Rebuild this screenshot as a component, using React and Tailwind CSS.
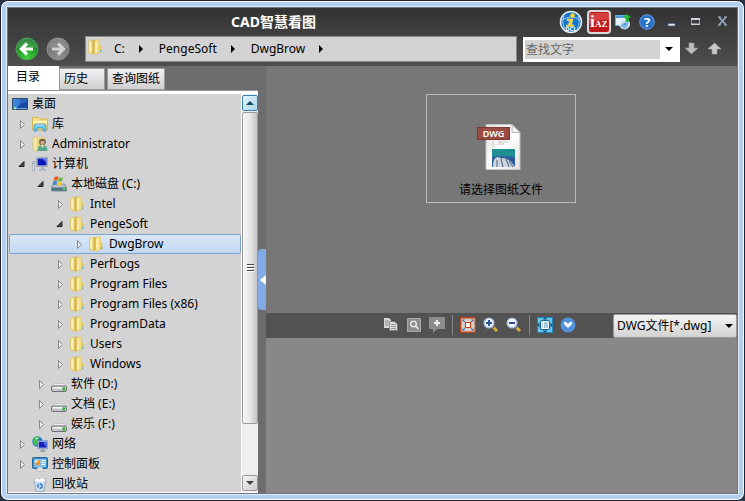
import React, { useState } from 'react';
import clsx from 'clsx';

const TREE = [
  { name: '桌面', icon: 'desktop', level: 0 },
  { name: '库', icon: 'library', level: 1, state: 'closed' },
  { name: 'Administrator', icon: 'user', level: 1, state: 'closed' },
  { name: '计算机', icon: 'computer', level: 1, state: 'open' },
  { name: '本地磁盘 (C:)', icon: 'system', level: 2, state: 'open' },
  { name: 'Intel', icon: 'folder', level: 3, state: 'closed' },
  { name: 'PengeSoft', icon: 'folder', level: 3, state: 'open' },
  { name: 'DwgBrow', icon: 'folder', level: 4, state: 'closed' },
  { name: 'PerfLogs', icon: 'folder', level: 3, state: 'closed' },
  { name: 'Program Files', icon: 'folder', level: 3, state: 'closed' },
  { name: 'Program Files (x86)', icon: 'folder', level: 3, state: 'closed' },
  { name: 'ProgramData', icon: 'folder', level: 3, state: 'closed' },
  { name: 'Users', icon: 'folder', level: 3, state: 'closed' },
  { name: 'Windows', icon: 'folder', level: 3, state: 'closed' },
  { name: '软件 (D:)', icon: 'drive', level: 2, state: 'closed' },
  { name: '文档 (E:)', icon: 'drive', level: 2, state: 'closed' },
  { name: '娱乐 (F:)', icon: 'drive', level: 2, state: 'closed' },
  { name: '网络', icon: 'network', level: 1, state: 'closed' },
  { name: '控制面板', icon: 'control', level: 1, state: 'closed' },
  { name: '回收站', icon: 'recycle', level: 1 },
];

const INDENT = ['pl-0.5', 'pl-[5px]', 'pl-6', 'pl-[43px]', 'pl-[62px]'];
const TABS = ['目录', '历史', '查询图纸'];

const FolderIcon = () => (
  <svg viewBox="0 0 16 16" className="h-4 w-4 shrink-0">
    <path d="M.5 2.2 5 1.2v13.6l-4.5-1z" fill="#f3df8c" stroke="#d9bf62" strokeWidth=".6" />
    <path d="M1.5 3 3 2.6v10.6l-1.5-.4z" fill="#fbf3bf" />
    <path d="M4.5 1.2 7.5.6v13.6l-3 1z" fill="#d3b449" />
    <path d="M6.5 1.6 11.5.4v13.2l-5 1.9z" fill="#f3de83" stroke="#d9bd58" strokeWidth=".5" />
    <path d="M7.3 2.6 9 2.2v11.2l-1.7.6z" fill="#fbf0b2" />
    <path d="M11.5 6.5h2v6.7l-2 .6z" fill="#e6ca5d" />
    <path d="M12 11h1.2v2H12z" fill="#53b8c8" />
  </svg>
);

const Monitor = ({ x = 0, y = 0 }) => (
  <g transform={`translate(${x} ${y})`}>
    <path d="M0 0h10v8H0z" fill="#dce6f0" stroke="#5a6fb0" strokeWidth=".6" />
    <path d="M1 1h8v6H1z" fill="#1420b8" />
    <path d="M5 1h4v6z" fill="#4b6df0" />
    <path d="M4 8h2v2h2v1H2v-1h2z" fill="#8796a5" />
  </g>
);

const TreeIcon = ({ type }) => {
  if (type === 'folder') return <FolderIcon />;
  return (
    <svg viewBox="0 0 16 16" className="h-4 w-4 shrink-0">
      {type === 'desktop' && (
        <>
          <path d="M.5 2.5h15v11H.5z" fill="#174aa4" stroke="#334a69" />
          <path d="M1 3h9L5 12H1z" fill="#3d83dc" />
          <path d="M8 3h7v3c-3 0-7 2-9 6z" fill="#2c62ba" />
          <path d="M1 12h14v1H1z" fill="#7aa7cf" />
          <circle cx="3" cy="12" r="1.5" fill="#55c1e8" />
          <path d="M2.5 11.5h1.5V13H2.5z" fill="#f5cf42" />
        </>
      )}
      {type === 'library' && (
        <>
          <path d="M.5 1.5h6L8 3h7.5v11H.5z" fill="#f2dc85" stroke="#d6b650" />
          <path d="M1 5h14v2H1z" fill="#fff3b5" />
          <path d="M2 15V11q0-3 3-3h6q3 0 3 3v4h-3v-3H5v3z" fill="#6bc6eb" stroke="#348bc3" strokeWidth=".7" />
          <path d="M3.5 10q1-1 2-1h5q1 0 2 1" fill="none" stroke="#c9f0fd" />
        </>
      )}
      {type === 'user' && (
        <>
          <path d="M1 1.5 6 .8v14.4l-5-1z" fill="#f6e8a2" stroke="#d3b651" strokeWidth=".6" />
          <path d="M5 1.2h8V14l-8 1z" fill="#e9d27a" />
          <path d="M5.5 15q0-6 5-6t5 6z" fill="#58a68b" />
          <path d="m9 9 1.5 3L12 9z" fill="#eef3ee" />
          <circle cx="10.5" cy="6" r="3.3" fill="#6c5a48" />
          <circle cx="10.5" cy="6.8" r="2.1" fill="#d9aa82" />
        </>
      )}
      {type === 'computer' && (
        <>
          <path d="M.5 5.5h2v9h-2z" fill="#e6ebee" stroke="#8e9ca7" strokeWidth=".7" />
          <path d="M1 7h1v1H1z" fill="#3cbe46" />
          <path d="M4.5 1.5h11v9h-11z" fill="#dce3ea" stroke="#8b98a6" strokeWidth=".7" />
          <path d="M5.5 2.5h9v7h-9z" fill="#0c1bb8" />
          <path d="M10 2.5h4.5v4z" fill="#5c80ee" />
          <path d="M9 11h3v2h2v1.5H7V13h2z" fill="#a8b5c0" />
        </>
      )}
      {type === 'system' && (
        <>
          <path d="M.5 11.5 2.5 8h11l2 3.5V15H.5z" fill="#b8c1c8" stroke="#59656d" strokeWidth=".6" />
          <path d="M1 11.5h14v3.3H1z" fill="#4f7782" />
          <path d="M12 12h2v2h-2z" fill="#42e25c" />
          <path d="M3.5 1.2q2-1.5 4-.3L6.5 4.6q-2-1-4 .2z" fill="#e65a24" />
          <path d="M8 1.2q2 1 4 0l-1 3.7q-2 1-4 0z" fill="#6eb93c" />
          <path d="M2.3 5.3q2-1 3.9 0L5.3 9q-2-1-4 .2z" fill="#3d88dd" />
          <path d="M6.8 5.5q2 1 4 0l-1 3.7q-2 1-4 0z" fill="#f7ca35" />
        </>
      )}
      {type === 'drive' && (
        <>
          <path d="M3 7.5h10l2.3 3H.7z" fill="#e9e9ea" stroke="#b5b5b8" strokeWidth=".6" />
          <rect x=".5" y="10" width="15" height="5.5" rx="1.5" fill="#c2c4ca" stroke="#6e7277" />
          <path d="M2 11h9v1.5H2z" fill="#fafafc" />
          <path d="M11.5 11.5h2.5v3h-2.5z" fill="#2eb52b" />
        </>
      )}
      {type === 'network' && (
        <>
          <circle cx="5.5" cy="5.5" r="5.2" fill="#2379cf" />
          <path d="M2 1.8q3.5-2.3 6-.5L5.5 4l1 2.5-3 3.5-2.5-4z" fill="#3fc447" />
          <path d="M3.5 2q2-1 3 0l-2 2z" fill="#c8f5d2" />
          <Monitor x={5.7} y={4.7} />
        </>
      )}
      {type === 'control' && (
        <>
          <rect x=".5" y="1.5" width="15" height="11" rx="1" fill="#3c91cf" stroke="#286899" />
          <path d="M2 3h12v8H2z" fill="#7cc0ea" />
          <circle cx="5.5" cy="6.5" r="2.7" fill="#f4f5ef" />
          <path d="M5.5 3.8A2.7 2.7 0 1 1 2.8 6.5h2.7z" fill="#f28c25" />
          <path d="M9.5 4.5H14M9.5 6.5H14M9.5 8.5H13" stroke="#fff" />
          <path d="M5 13q0-2 3-2t3 2v2.5H5z" fill="#e2e4e6" stroke="#aaa" strokeWidth=".5" />
        </>
      )}
      {type === 'recycle' && (
        <>
          <path d="M2 3h12l-2 12.5H4z" fill="#cbdcE8" stroke="#93a7b8" strokeWidth=".8" />
          <path d="m2.5 3.5 2.5-1.5 2 1.5L10 2l3.5 1.5-1 2h-9z" fill="#f9fbfc" />
          <circle cx="8" cy="10" r="2.1" fill="none" stroke="#3b7ed5" strokeWidth="1.5" strokeDasharray="3.4 1" />
        </>
      )}
    </svg>
  );
};

const Expander = ({ state }) => (
  <svg viewBox="0 0 14 14" className="h-3.5 w-3.5 shrink-0">
    {state === 'closed' && <path d="M5.5 3.5v8L9.5 7.5z" fill="#eee" stroke="#888" />}
    {state === 'open' && <path d="M9 4.5v5H4z" fill="#484848" stroke="#222" />}
  </svg>
);

const NavButton = ({ label, forward }) => (
  <button aria-label={label} className="h-6 w-6 shrink-0">
    <svg viewBox="0 0 24 24" className="h-6 w-6">
      <defs>
        <radialGradient id={forward ? 'nav-grey' : 'nav-green'} cx="50%" cy="90%" r="80%">
          <stop offset="0" stopColor={forward ? '#8f8f8f' : '#3fd03a'} />
          <stop offset="1" stopColor={forward ? '#707070' : '#117a24'} />
        </radialGradient>
      </defs>
      <circle cx="12" cy="12" r="11" fill={forward ? 'url(#nav-grey)' : 'url(#nav-green)'} stroke={forward ? '#8e8e8e' : '#4f9a58'} />
      <path d="M2 11a10 10 0 0 1 20 0Q12 8 2 11z" fill="#fff" opacity=".14" />
      <path
        d={forward ? 'M6 12h11M12 6.5l5.5 5.5-5.5 5.5' : 'M18 12H7M12 6.5 6.5 12l5.5 5.5'}
        fill="none"
        stroke={forward ? '#d2d2d2' : '#fff'}
        strokeWidth="3.2"
      />
    </svg>
  </button>
);

const TitleBar = () => (
  <div className="flex h-7 items-center pr-1.5 text-white">
    <h1 className="min-w-0 flex-1 truncate pl-[223px] text-sm leading-6 font-bold">CAD智慧看图</h1>
    <div className="flex shrink-0 items-center">
      <button aria-label="DCL" className="h-6 w-6">
        <svg viewBox="0 0 24 24" className="h-6 w-6">
          <circle cx="12" cy="12" r="10.5" fill="#1676c7" stroke="#e6edf3" strokeWidth="1.5" />
          <path d="M3 10q9-6 18 0M5 6q-3 6 1 13M19 6q3 6-1 13" fill="none" stroke="#9acdf0" />
          <path d="M8 9h6l-1.5 6H15v1.5H7.5V15h2L10.5 10.5H8z" fill="#ffcf23" stroke="#fff0a0" strokeWidth=".5" />
          <circle cx="13.5" cy="5.5" r="2.3" fill="#ffd52c" />
          <text x="12" y="21" textAnchor="middle" fontSize="6" fontWeight="bold" fill="#fff">DCL</text>
        </svg>
      </button>
      <button aria-label="iAZ" className="ml-1 h-6 w-6">
        <svg viewBox="0 0 24 24" className="h-6 w-6">
          <rect x="1" y="1" width="22" height="22" rx="3" fill="#c0181c" stroke="#dadada" strokeWidth="2" />
          <path d="M2 3h20v7q-9-1-20 4z" fill="#e05b57" opacity=".6" />
          <text x="3" y="17" fontFamily="Liberation Serif, serif" fontSize="17" fontWeight="bold" fill="#fff">i</text>
          <text x="8" y="17" fontFamily="Liberation Serif, serif" fontSize="9" fontWeight="bold" fill="#fff">AZ</text>
        </svg>
      </button>
      <button aria-label="更新" className="ml-1 h-4 w-4">
        <svg viewBox="0 0 16 16" className="h-4 w-4">
          <path d="M.5 1.5h10v10H.5z" fill="#e6f2fc" stroke="#6eafe2" />
          <path d="M1 2h9v2H1z" fill="#4897dc" />
          <circle cx="9.5" cy="10" r="5" fill="#cfe2f4" stroke="#eef6fc" />
          <path d="M5 12q4-4 9-4-1 6-5 7z" fill="#7fb6e6" />
          <circle cx="9.5" cy="10" r="1.3" fill="#4f8ec8" />
          <path d="m12 0 4 4h-2.5v4h-3V4H8z" fill="#20bd37" />
        </svg>
      </button>
      <button aria-label="帮助" className="ml-2 h-4 w-4">
        <svg viewBox="0 0 16 16" className="h-4 w-4">
          <circle cx="8" cy="8" r="7.3" fill="#2970c8" stroke="#65a0e1" />
          <text x="8" y="12.5" textAnchor="middle" fontSize="13" fontWeight="bold" fill="#fff">?</text>
        </svg>
      </button>
      <button aria-label="最小化" className="ml-2 h-4 w-4">
        <svg viewBox="0 0 16 16" className="h-4 w-4"><path d="M5 9.5h7v2.5H5z" fill="#dbe4ef" stroke="#526680" strokeWidth=".7" /></svg>
      </button>
      <button aria-label="最大化" className="ml-2 h-4 w-4">
        <svg viewBox="0 0 16 16" className="h-4 w-4"><path d="M4.5 4.5h8v6h-8z" fill="none" stroke="#8fa2bb" /><path d="M4 4h9v2H4zM4 9.5h9V11H4z" fill="#c9d6e5" /></svg>
      </button>
      <button aria-label="关闭" className="ml-3 h-4 w-4">
        <svg viewBox="0 0 16 16" className="h-4 w-4"><path d="m4 3 7 8M11 3l-7 8" stroke="#91a4bd" strokeWidth="1.8" /><path d="M3 3h3M9 3h3M3 11h3M9 11h3" stroke="#a6b5c8" /></svg>
      </button>
    </div>
  </div>
);

const CrumbArrow = () => (
  <svg viewBox="0 0 8 8" className="h-2 w-2 shrink-0"><path d="M2 0v8l4-4z" fill="#000" /></svg>
);

const AddressBar = () => (
  <div className="flex h-[30px] items-center pb-1">
    <div className="flex w-[77px] shrink-0 items-center gap-[7px] pl-[7px]">
      <NavButton label="后退" />
      <NavButton label="前进" forward />
    </div>
    <nav aria-label="路径" className="flex h-[26px] min-w-0 flex-1 items-center border border-[#8a8a8a] bg-[#d3d3d3] pl-0.5 text-black">
      <span className="pb-1"><FolderIcon /></span>
      <button className="ml-[10px]">C:</button>
      <span className="ml-3"><CrumbArrow /></span>
      <button className="ml-[14px]">PengeSoft</button>
      <span className="ml-3"><CrumbArrow /></span>
      <button className="ml-[14px]">DwgBrow</button>
      <span className="ml-3"><CrumbArrow /></span>
    </nav>
    <div className="ml-1.5 flex h-[25px] w-[157px] shrink-0 items-center bg-white p-[2px]">
      <input
        aria-label="查找文字"
        placeholder="查找文字"
        className="h-[19px] w-[135px] bg-[#d3d3d3] pl-px text-black outline-none placeholder:text-[#666]"
      />
      <button aria-label="查找记录" className="flex h-5 flex-1 items-center justify-center">
        <svg viewBox="0 0 8 4" className="h-1 w-2"><path d="M0 0h8L4 4z" fill="#000" /></svg>
      </button>
    </div>
    <button aria-label="查找下一个" className="ml-1 h-4 w-4">
      <svg viewBox="0 0 16 16" className="h-4 w-4"><path d="M5 2h5v5h4l-6.5 6L1 7h4z" fill="#bdbdbd" stroke="#969696" strokeWidth=".6" /></svg>
    </button>
    <button aria-label="查找上一个" className="ml-[7px] mr-[14px] h-4 w-4">
      <svg viewBox="0 0 16 16" className="h-4 w-4"><path d="M5 13h5V8h4L7.5 2 1 8h4z" fill="#c8c8c8" stroke="#a3a3a3" strokeWidth=".6" /></svg>
    </button>
  </div>
);

const ScrollBar = () => (
  <div className="flex w-[17px] shrink-0 flex-col border-l border-white bg-[#f0f0f0] py-px">
    <button aria-label="向上滚动" className="flex h-4 w-4 shrink-0 items-center justify-center rounded-xs border border-[#3c7fb1] bg-gradient-to-br from-[#e5f5fd] to-[#a9d5ed]">
      <svg viewBox="0 0 8 4" className="h-1 w-2"><path d="M0 4h8L4 0z" fill="#17495c" /></svg>
    </button>
    <div className="flex min-h-0 flex-1 flex-col pt-px">
      <div className="flex h-[86%] w-4 flex-col items-center justify-center gap-px rounded-xs border border-[#999] bg-gradient-to-r from-[#f6f6f6] via-[#e8e8e8] to-[#c5c5c8]">
        <span className="h-0.5 w-[7px] border-b border-white bg-[#444]" />
        <span className="h-0.5 w-[7px] border-b border-white bg-[#444]" />
        <span className="h-0.5 w-[7px] border-b border-white bg-[#444]" />
      </div>
    </div>
    <button aria-label="向下滚动" className="flex h-4 w-4 shrink-0 items-center justify-center rounded-xs border border-[#999] bg-gradient-to-br from-[#f5f5f5] to-[#ccc]">
      <svg viewBox="0 0 8 4" className="h-1 w-2"><path d="M0 0h8L4 4z" fill="#444" /></svg>
    </button>
  </div>
);

const Sidebar = () => {
  const [tab, setTab] = useState('目录');
  const [selected, setSelected] = useState('DwgBrow');

  return (
    <aside className="flex w-[250px] shrink-0 flex-col">
      <div role="tablist" className="flex h-[25px] shrink-0 items-end gap-0.5 border-b border-[#999]">
        {TABS.map((name) => (
          <button
            key={name}
            role="tab"
            aria-selected={tab === name}
            onClick={() => setTab(name)}
            className={clsx(
              'text-left text-black',
              tab === name
                ? '-mr-0.5 h-6 w-[51px] bg-white pb-0.5 pl-2'
                : 'h-[22px] border border-[#999] bg-gradient-to-b from-[#f2f2f2] to-[#cfcfcf] px-1',
              name === '历史' && tab !== name && 'w-[46px]',
            )}
          >
            {name}
          </button>
        ))}
      </div>
      <div className="flex min-h-0 flex-1 border-t-[3px] border-b border-white">
        <ul role="tree" aria-label="目录" className="min-w-0 flex-1 overflow-hidden bg-[#d3d3d3] pl-px">
          {TREE.map((node) => (
            <li key={node.name} role="treeitem" aria-selected={selected === node.name} aria-expanded={node.state === 'open'}>
              <button
                onClick={() => setSelected(node.name)}
                className={clsx(
                  'flex h-5 w-full items-center rounded-xs border text-left text-black',
                  selected === node.name
                    ? 'border-[#7da2ce] bg-gradient-to-b from-[#dce7f6] to-[#c1d8f4]'
                    : 'border-transparent',
                )}
              >
                <span className={clsx('flex items-center gap-1', INDENT[node.level])}>
                  <span className="flex items-center gap-[3px]">
                    {node.level > 0 && <Expander state={node.state} />}
                    <TreeIcon type={node.icon} />
                  </span>
                  <span className="whitespace-nowrap">{node.name}</span>
                </span>
              </button>
            </li>
          ))}
        </ul>
        <ScrollBar />
      </div>
    </aside>
  );
};

const DwgFileIcon = () => (
  <svg viewBox="0 0 48 46" className="h-[46px] w-12">
    <defs>
      <linearGradient id="sheet" x1="0" y1="0" x2="1" y2="1">
        <stop offset="0" stopColor="#dedede" />
        <stop offset=".5" stopColor="#fff" />
        <stop offset="1" stopColor="#e2e2e2" />
      </linearGradient>
    </defs>
    <path d="M9 .5h26l8 8v37H9z" fill="url(#sheet)" stroke="#c5c5c5" />
    <path d="M35 .5v8h8z" fill="#f2f2f2" stroke="#aaa" strokeWidth=".8" />
    <path d="M16 17v6M21 18h11M21 20h6" stroke="#b8b8b8" strokeWidth=".8" />
    <path d="M15 25h23v9H15z" fill="#1e8f92" />
    <path d="M15 33q12-2 23 0v10H15z" fill="#2e5c9b" />
    <path d="M16 43q0-10 5-10 5 0 7 10zM25 43V34q8 0 13 9z" fill="#cdd7e2" />
    <path d="M20 36v7M24 35l2 8M29 35l3 8M32 37l4 6" stroke="#5d6f86" strokeWidth="1.1" />
    <rect x=".5" y="3.5" width="32" height="12" fill="#9c4b40" stroke="#7b3931" />
    <text x="16.5" y="13" textAnchor="middle" fontSize="9" fontWeight="600" fill="#fff">DWG</text>
  </svg>
);

const Magnifier = ({ plus }) => (
  <svg viewBox="0 0 16 16" className="h-4 w-4">
    <path d="m10 10 4 4" stroke="#dcae3c" strokeWidth="3" />
    <path d="m9 9 2 2" stroke="#707070" strokeWidth="2" />
    <circle cx="6" cy="6" r="5" fill="#eef5ff" stroke="#9fb5da" strokeWidth="1.2" />
    <path d={plus ? 'M3 6h6M6 3v6' : 'M3 6h6'} stroke="#304f99" strokeWidth="2" />
  </svg>
);

const Toolbar = () => (
  <div className="flex h-[25px] shrink-0 items-center bg-[#525252]">
    <div className="flex min-w-0 flex-1 items-center gap-[7px] pb-px pl-[117px]">
      <button aria-label="复制" className="h-4 w-4">
        <svg viewBox="0 0 16 16" className="h-4 w-4">
          <path d="M1 1h5l2 2v8H1z" fill="#d7d7d7" />
          <path d="M2 4h4M2 6h4M2 8h4" stroke="#777" strokeWidth=".7" />
          <path d="M6.5 4.5h5l3 2.5v6.5h-8z" fill="#ddd" stroke="#666" strokeWidth=".6" />
          <path d="M8 7.5h5M8 9.5h5M8 11.5h5" stroke="#777" strokeWidth=".7" />
        </svg>
      </button>
      <button aria-label="查找" className="h-4 w-4">
        <svg viewBox="0 0 16 16" className="h-4 w-4">
          <path d="M1.5 1.5h13v13h-13z" fill="#8c8c8c" stroke="#aaa" />
          <circle cx="7.5" cy="7" r="2.8" fill="none" stroke="#eee" strokeWidth="1.3" />
          <path d="m9.5 9 3 3" stroke="#eee" strokeWidth="1.6" />
        </svg>
      </button>
      <button aria-label="批注" className="h-4 w-4">
        <svg viewBox="0 0 16 16" className="h-4 w-4">
          <path d="M0 0h16v12H8l-4 4v-4H0z" fill="#8c8c8c" />
          <path d="M5 6h6M8 3v6" stroke="#eee" strokeWidth="2" />
        </svg>
      </button>
      <span className="h-5 w-px bg-[#888]" />
      <button aria-label="全图" className="h-4 w-4">
        <svg viewBox="0 0 16 16" className="h-4 w-4">
          <path d="M.7.7h14.6v14.6H.7z" fill="#d5d0ce" stroke="#bf4314" strokeWidth="1.4" />
          <path d="M2.5 2.5H5L2.5 5zm11 0V5L11 2.5zM2.5 13.5V11L5 13.5zm11 0H11l2.5-2.5z" fill="#465a91" />
          <path d="m3 3 2 2m8-2-2 2M3 13l2-2m8 2-2-2" stroke="#50618f" strokeWidth="1" />
          <path d="M5.5 5.5h5v5h-5z" fill="#fff" stroke="#bf4314" strokeWidth="1.2" />
        </svg>
      </button>
      <button aria-label="放大" className="h-4 w-4"><Magnifier plus /></button>
      <button aria-label="缩小" className="h-4 w-4"><Magnifier /></button>
      <span className="h-5 w-px bg-[#888]" />
      <button aria-label="全屏" className="h-4 w-4">
        <svg viewBox="0 0 16 16" className="h-4 w-4">
          <path d="M.5.5h15v15H.5z" fill="#6cc4ea" stroke="#2387bd" />
          <path d="m8 0 2.5 2.5h-5zM8 16l2.5-2.5h-5zM0 8l2.5-2.5v5zm16 0-2.5-2.5v5z" fill="#0b587f" />
          <rect x="3.5" y="3.5" width="9" height="9" rx="1.5" fill="#fff" stroke="#126596" />
          <path d="M5 6h1M7 6h4M5 8h1M7 8h4M5 10h1M7 10h4" stroke="#267aad" strokeWidth=".8" />
        </svg>
      </button>
      <button aria-label="更多" className="h-4 w-4">
        <svg viewBox="0 0 16 16" className="h-4 w-4">
          <circle cx="8" cy="8" r="7.5" fill="#5294dc" />
          <path d="M4 5h2l2 2 2-2h2v2l-4 4-4-4z" fill="#fff" />
        </svg>
      </button>
    </div>
    <div className="relative shrink-0">
      <select
        aria-label="文件类型"
        className="block h-6 w-[124px] appearance-none rounded-xs border border-[#999] bg-gradient-to-b from-[#f4f4f4] to-[#d2d2d2] pl-[3px] text-black"
      >
        <option>DWG文件[*.dwg]</option>
      </select>
      <svg viewBox="0 0 8 4" className="pointer-events-none absolute top-[10px] right-1 h-1 w-2"><path d="M0 0h8L4 4z" fill="#000" /></svg>
    </div>
  </div>
);

export default function App() {
  return (
    <div className="h-screen bg-[#263548] font-['Noto_Sans','Noto_Sans_CJK_SC',sans-serif] text-[12px] leading-4">
      <div className="h-full rounded-lg border border-[#20242e] bg-[#b3cfef] p-[6px] inset-ring inset-ring-white">
        <div className="flex h-full flex-col border border-[#6b7482] ring-1 ring-[#e0ebf7]">
          <header className="shrink-0 bg-gradient-to-b from-[#333] to-[#4e4e4e]">
            <TitleBar />
            <AddressBar />
          </header>
          <div className="flex min-h-0 flex-1 bg-[#6d6d6d]">
            <Sidebar />
            <div className="flex w-2 shrink-0 items-center">
              <button aria-label="收起目录" className="flex h-[61px] w-2 items-center justify-end rounded-l-sm bg-[#83aae5]">
                <svg viewBox="0 0 6 10" className="h-2.5 w-1.5"><path d="M6 0v10L0 5z" fill="#fff" /></svg>
              </button>
            </div>
            <main className="flex min-w-0 flex-1 flex-col">
              <section className="flex min-h-0 flex-[219] justify-center bg-[#777] pt-7">
                <div className="mr-px flex h-[109px] w-[150px] flex-col items-center justify-end border border-[#bbb] pb-1 text-black">
                  <DwgFileIcon />
                  <p className="mt-3">请选择图纸文件</p>
                </div>
              </section>
              <Toolbar />
              <section className="flex-[155] bg-[#888]" />
            </main>
          </div>
        </div>
      </div>
    </div>
  );
}
